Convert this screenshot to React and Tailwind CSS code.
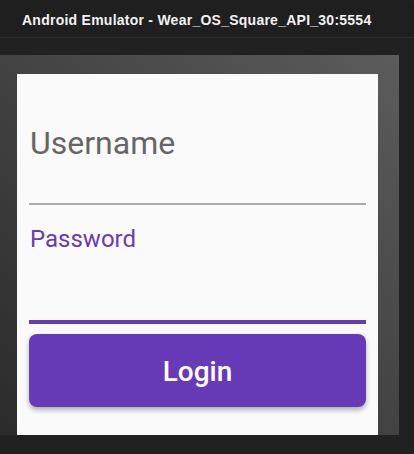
export default function App() {
  return (
    <div className="h-[454px] w-[414px] overflow-hidden bg-[#212121]">
      {/* window title bar */}
      <div className="flex h-[38px] items-center rounded-tr-[10px] border-b border-[#2c2c2c] bg-[#1f1f1f] pl-[22px] pt-[4px]">
        <span className="font-['Liberation_Sans',sans-serif] text-[14px] font-bold tracking-[0.25px] text-[#f2f2f2]">
          Android Emulator - Wear_OS_Square_API_30:5554
        </span>
      </div>

      <div className="mt-[17px] flex">
        {/* device bezel */}
        <div className="h-[380px] w-[399px] bg-linear-to-bl from-[#5c5c5c] to-[#2b2b2b] pl-[17px] pt-[19px]">
          {/* watch screen */}
          <div className="flex h-[361px] w-[361px] flex-col bg-[#fafafa] px-[12px] pt-[51px] font-['Roboto',sans-serif]">
            <div className="pl-[1px] text-[32px] leading-[36px] text-[#666666]">Username</div>
            <div className="mt-[42px] h-[2px] bg-[#acacac]" />

            <div className="mt-[20px] pl-[1px] text-[24px] leading-[28px] text-[#673ab7]">Password</div>
            <div className="mt-[67px] h-[4px] bg-[#673ab7]" />

            <button className="mt-[10px] flex h-[73px] items-center justify-center rounded-[8px] bg-[#673ab7] pt-[3px] text-[28px] font-medium text-white shadow-[0_3px_5px_rgba(0,0,0,0.3)]">
              Login
            </button>
          </div>
        </div>
      </div>
    </div>
  );
}
